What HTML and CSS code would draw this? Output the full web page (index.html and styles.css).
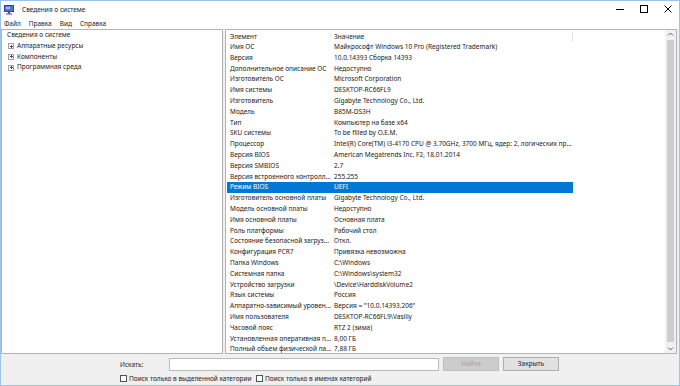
FILE: index.html
```html
<!DOCTYPE html>
<html lang="ru">
<head>
    <meta charset="UTF-8">
    <title>Сведения о системе</title>
    <link rel="stylesheet" href="styles.css">
</head>
<body>
<div class="window">
    <div class="titlebar">
        <svg class="app-icon" width="11" height="11" viewBox="0 0 11 11">
            <rect x="0.5" y="1.5" width="9" height="6" fill="#4a78d8" stroke="#4b3c8e"/>
            <rect x="2" y="3" width="4" height="2" fill="#9fc0f0"/>
            <rect x="4" y="8" width="2" height="1.5" fill="#4b3c8e"/>
            <rect x="2" y="9.5" width="6" height="1" fill="#4b3c8e"/>
        </svg>
        <span class="title">Сведения о системе</span>
        <div class="controls">
            <span class="ctl ctl-min"></span>
            <span class="ctl ctl-max"></span>
            <svg class="ctl ctl-close" width="8" height="8" viewBox="0 0 8 8">
                <path d="M0.5 0.5L7.5 7.5M7.5 0.5L0.5 7.5" stroke="#000" stroke-width="1"/>
            </svg>
        </div>
    </div>
    <ul class="menu">
        <li>Файл</li>
        <li>Правка</li>
        <li>Вид</li>
        <li>Справка</li>
    </ul>
    <div class="main">
        <div class="tree">
            <div class="node root">Сведения о системе</div>
            <div class="node"><span class="plus"></span>Аппаратные ресурсы</div>
            <div class="node"><span class="plus"></span>Компоненты</div>
            <div class="node"><span class="plus"></span>Программная среда</div>
        </div>
        <div class="list">
            <div class="table">
                <div class="row head"><span class="c1">Элемент</span><span class="c2">Значение</span></div>
                <div class="row"><span class="c1">Имя ОС</span><span class="c2">Майкрософт Windows 10 Pro (Registered Trademark)</span></div>
                <div class="row"><span class="c1">Версия</span><span class="c2">10.0.14393 Сборка 14393</span></div>
                <div class="row"><span class="c1">Дополнительное описание ОС</span><span class="c2">Недоступно</span></div>
                <div class="row"><span class="c1">Изготовитель ОС</span><span class="c2">Microsoft Corporation</span></div>
                <div class="row"><span class="c1">Имя системы</span><span class="c2">DESKTOP-RC66FL9</span></div>
                <div class="row"><span class="c1">Изготовитель</span><span class="c2">Gigabyte Technology Co., Ltd.</span></div>
                <div class="row"><span class="c1">Модель</span><span class="c2">B85M-DS3H</span></div>
                <div class="row"><span class="c1">Тип</span><span class="c2">Компьютер на базе x64</span></div>
                <div class="row"><span class="c1">SKU системы</span><span class="c2">To be filled by O.E.M.</span></div>
                <div class="row"><span class="c1">Процессор</span><span class="c2">Intel(R) Core(TM) i3-4170 CPU @ 3.70GHz, 3700 МГц, ядер: 2, логических пр...</span></div>
                <div class="row"><span class="c1">Версия BIOS</span><span class="c2">American Megatrends Inc. F2, 18.01.2014</span></div>
                <div class="row"><span class="c1">Версия SMBIOS</span><span class="c2">2.7</span></div>
                <div class="row"><span class="c1">Версия встроенного контролл...</span><span class="c2">255.255</span></div>
                <div class="row selected"><span class="c1">Режим BIOS</span><span class="c2">UEFI</span></div>
                <div class="row"><span class="c1">Изготовитель основной платы</span><span class="c2">Gigabyte Technology Co., Ltd.</span></div>
                <div class="row"><span class="c1">Модель основной платы</span><span class="c2">Недоступно</span></div>
                <div class="row"><span class="c1">Имя основной платы</span><span class="c2">Основная плата</span></div>
                <div class="row"><span class="c1">Роль платформы</span><span class="c2">Рабочий стол</span></div>
                <div class="row"><span class="c1">Состояние безопасной загруз...</span><span class="c2">Откл.</span></div>
                <div class="row"><span class="c1">Конфигурация PCR7</span><span class="c2">Привязка невозможна</span></div>
                <div class="row"><span class="c1">Папка Windows</span><span class="c2">C:\Windows</span></div>
                <div class="row"><span class="c1">Системная папка</span><span class="c2">C:\Windows\system32</span></div>
                <div class="row"><span class="c1">Устройство загрузки</span><span class="c2">\Device\HarddiskVolume2</span></div>
                <div class="row"><span class="c1">Язык системы</span><span class="c2">Россия</span></div>
                <div class="row"><span class="c1">Аппаратно-зависимый уровен...</span><span class="c2">Версия = "10.0.14393.206"</span></div>
                <div class="row"><span class="c1">Имя пользователя</span><span class="c2">DESKTOP-RC66FL9\Vasiliy</span></div>
                <div class="row"><span class="c1">Часовой пояс</span><span class="c2">RTZ 2 (зима)</span></div>
                <div class="row"><span class="c1">Установленная оперативная п...</span><span class="c2">8,00 ГБ</span></div>
                <div class="row"><span class="c1">Полный объем физической па...</span><span class="c2">7,88 ГБ</span></div>
            </div>
            <div class="scrollbar">
                <svg class="arrow" width="11" height="9" viewBox="0 0 11 9"><path d="M3 5.5L5.5 3L8 5.5" fill="none" stroke="#606060"/></svg>
                <div class="thumb"></div>
                <svg class="arrow" width="11" height="9" viewBox="0 0 11 9"><path d="M3 3.5L5.5 6L8 3.5" fill="none" stroke="#606060"/></svg>
            </div>
        </div>
    </div>
    <div class="search">
        <div class="search-row">
            <span class="label">Искать:</span>
            <div class="input"></div>
            <span class="btn disabled">Найти</span>
            <span class="btn">Закрыть</span>
        </div>
        <div class="check-row">
            <span class="check"><span class="box"></span>Поиск только в выделенной категории</span>
            <span class="check"><span class="box"></span>Поиск только в именах категорий</span>
        </div>
    </div>
</div>
</body>
</html>
```

FILE: styles.css
```css
*{
    margin: 0px;
    padding: 0px;
    box-sizing: border-box;
}
body{
    font-family: "Noto Sans", "Open Sans", sans-serif;
    font-size: 6.5px;
    color: #1a1a1a;
    background: #f0f0f0;
}
li{
    list-style: none;
}
.window{
    width: 680px;
    height: 386px;
    border: 1px solid #9cc3e8;
    background: #f0f0f0;
    display: flex;
    flex-direction: column;
    overflow: hidden;
}
.titlebar{
    height: 16px;
    background: #fff;
    display: flex;
    align-items: center;
    padding-left: 3px;
}
.app-icon{
    margin-right: 7px;
}
.title{
    flex: 1;
}
.controls{
    display: flex;
    align-items: center;
}
.ctl{
    display: block;
}
.ctl-min{
    width: 8px;
    height: 1px;
    background: #000;
    margin-right: 16px;
}
.ctl-max{
    width: 8px;
    height: 8px;
    border: 1px solid #000;
    margin-right: 16px;
}
.ctl-close{
    margin-right: 7px;
}
.menu{
    height: 12px;
    background: #fff;
    display: flex;
    align-items: center;
    gap: 8px;
    padding-left: 3px;
}
.main{
    height: 325px;
    display: flex;
    gap: 2px;
    padding-right: 2px;
}
.tree{
    width: 222px;
    background: #fff;
    border: 1px solid #b4b4b4;
}
.node{
    height: 10.8px;
    line-height: 10.8px;
    display: flex;
    align-items: center;
    padding-left: 5px;
    white-space: nowrap;
}
.node .plus{
    width: 6px;
    height: 6px;
    border: 1px solid #a0a0a0;
    margin-left: 1px;
    margin-right: 3px;
    position: relative;
}
.node .plus::before,
.node .plus::after{
    content: "";
    position: absolute;
    background: #505050;
}
.node .plus::before{
    left: 0.5px;
    top: 1.5px;
    width: 3px;
    height: 1px;
}
.node .plus::after{
    left: 1.5px;
    top: 0.5px;
    width: 1px;
    height: 3px;
}
.list{
    flex: 1;
    background: #fff;
    border: 1px solid #b4b4b4;
    display: flex;
    overflow: hidden;
}
.table{
    flex: 1;
    padding-top: 1px;
    padding-left: 1px;
    overflow: hidden;
}
.row{
    width: 346px;
    height: 10.8px;
    line-height: 10.8px;
    display: flex;
    white-space: nowrap;
}
.row.head{
    height: 11px;
    line-height: 11px;
}
.row .c1,
.row .c2{
    padding-left: 3px;
    overflow: hidden;
}
.row .c1{
    width: 104px;
    flex: none;
}
.row .c2{
    flex: 1;
    text-overflow: ellipsis;
}
.row.head .c1{
    border-right: 1px solid #f0f0f0;
}
.row.head .c2{
    border-right: 1px solid #e5e5e5;
}
.row.selected{
    background: #0078d7;
    color: #fff;
}
.scrollbar{
    width: 11px;
    background: #f0f0f0;
    display: flex;
    flex-direction: column;
    align-items: center;
}
.arrow{
    display: block;
    flex: none;
}
.thumb{
    flex: 1;
    width: 7px;
    margin: 1px 0 2px;
    background: #cdcdcd;
}
.search{
    flex: 1;
    padding-left: 119px;
    padding-top: 3px;
}
.search-row{
    display: flex;
    align-items: center;
    height: 14px;
}
.label{
    width: 49px;
}
.input{
    width: 270px;
    height: 13px;
    background: #fff;
    border: 1px solid #b9b9b9;
    margin-right: 4px;
}
.btn{
    width: 56px;
    height: 14px;
    line-height: 12px;
    text-align: center;
    background: #e1e1e1;
    border: 1px solid #adadad;
    margin-right: 4px;
}
.btn.disabled{
    background: #cccccc;
    border-color: #bfbfbf;
    color: #a0a0a0;
}
.check-row{
    display: flex;
    margin-top: 3px;
    height: 9px;
    align-items: center;
}
.check{
    display: flex;
    align-items: center;
    width: 136px;
    white-space: nowrap;
}
.box{
    flex: none;
    width: 7px;
    height: 7px;
    border: 1px solid #555;
    background: #fff;
    margin-right: 2px;
}
```
